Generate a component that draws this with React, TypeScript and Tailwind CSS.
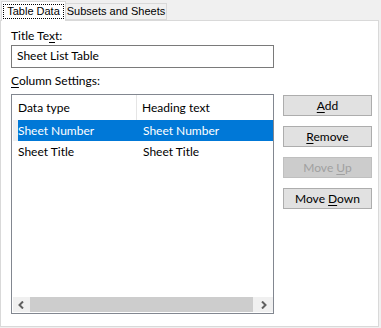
const uiFont = { fontFamily: "Lato, 'Noto Sans', sans-serif" };

function Chevron({ dir }: { dir: "left" | "right" }) {
  return (
    <svg width="7" height="8" viewBox="0 0 7 8" className="block">
      {dir === "left" ? (
        <path d="M5 0.5 L1.5 4 L5 7.5" fill="none" stroke="#606060" strokeWidth="2" />
      ) : (
        <path d="M2 0.5 L5.5 4 L2 7.5" fill="none" stroke="#606060" strokeWidth="2" />
      )}
    </svg>
  );
}

function WinButton({ label, mnemonic, disabled }: { label: string; mnemonic: number; disabled?: boolean }) {
  const before = label.slice(0, mnemonic);
  const key = label.charAt(mnemonic);
  const after = label.slice(mnemonic + 1);
  return (
    <div
      className={`flex h-[21px] w-[89px] items-center justify-center border text-[12px] leading-none ${
        disabled ? "border-[#bfbfbf] bg-[#cccccc] text-[#a0a0a0]" : "border-[#adadad] bg-[#e1e1e1] text-black"
      }`}
    >
      <span className="whitespace-pre">
        {before}
        <span className="underline underline-offset-2">{key}</span>
        {after}
      </span>
    </div>
  );
}

export default function App() {
  return (
    <div className="h-[328px] w-[381px] overflow-hidden bg-[#f0f0f0] text-black" style={uiFont}>
      <div className="flex h-[20px] items-end pl-[1px]" style={{ fontFamily: "'Liberation Sans', Arial, sans-serif" }}>
        <div className="relative z-10 -mb-px flex h-[20px] w-[65px] items-start border-x border-t border-[#d9d9d9] bg-white px-[1px] pt-[2px]">
          <span className="flex h-[15px] w-[61px] items-center justify-center border border-dotted border-black text-[11px] leading-none">
            Table Data
          </span>
        </div>
        <div className="flex h-[17px] w-[101px] items-center justify-center border-y border-r border-[#d9d9d9] bg-[#f0f0f0] text-[11px] leading-none">
          Subsets and Sheets
        </div>
      </div>

      <div className="h-[307px] w-[379px] border border-[#d9d9d9] bg-white pl-[10px] pt-[7px] text-[12px]">
        <div className="leading-[16px]">
          Title Te<span className="underline underline-offset-2">x</span>t:
        </div>
        <div className="mt-[1px] flex h-[23px] w-[263px] items-center border border-[#7a7a7a] pb-[2px] pl-[5px]">
          Sheet List Table
        </div>
        <div className="mt-[5px] leading-[16px]">
          <span className="underline underline-offset-2">C</span>olumn Settings:
        </div>

        <div className="mt-[5px] flex">
          <div className="flex h-[220px] w-[263px] flex-col border border-[#828790] pb-[1px] pl-[1px]">
            <div className="flex h-[25px] items-center">
              <div className="flex h-full w-[124px] items-center border-r border-[#e5e5e5] pl-[5px]">Data type</div>
              <div className="pl-[5px]">Heading text</div>
            </div>
            <div className="flex h-[21px] items-center">
              <div className="h-full w-[5px] bg-[#f0f0f0]" />
              <div className="flex h-full flex-1 items-center bg-[#0078d7] text-white">
                <div className="w-[119px]">Sheet Number</div>
                <div className="pl-[6px]">Sheet Number</div>
              </div>
            </div>
            <div className="flex h-[21px] items-center">
              <div className="w-[124px] pl-[5px]">Sheet Title</div>
              <div className="pl-[6px]">Sheet Title</div>
            </div>
            <div className="flex-1" />
            <div className="flex h-[15px]">
              <div className="flex w-[17px] items-center justify-center bg-[#f0f0f0]">
                <Chevron dir="left" />
              </div>
              <div className="flex-1 bg-[#cdcdcd]" />
              <div className="flex w-[20px] items-center justify-center bg-[#f0f0f0]">
                <Chevron dir="right" />
              </div>
            </div>
          </div>

          <div className="ml-[9px] flex flex-col gap-[10px] pt-[1px]">
            <WinButton label="Add" mnemonic={0} />
            <WinButton label="Remove" mnemonic={0} />
            <WinButton label="Move Up" mnemonic={5} disabled />
            <WinButton label="Move Down" mnemonic={5} />
          </div>
        </div>
      </div>
    </div>
  );
}
